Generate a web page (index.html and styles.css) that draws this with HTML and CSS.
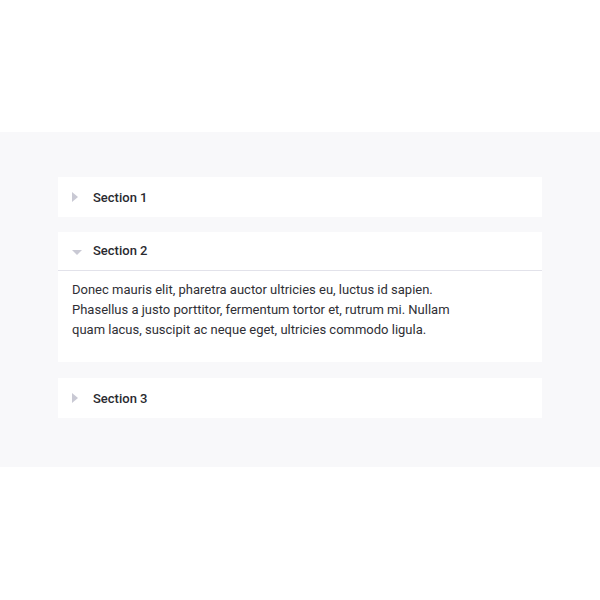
FILE: index.html
```html
<!DOCTYPE html>
<html>
<head>
<meta charset="utf-8">
<link rel="stylesheet" href="styles.css">
</head>
<body>
<section class="band">
  <div class="accordion">
    <div class="item">
      <div class="head"><span class="tri tri-right"></span><span class="title">Section 1</span></div>
    </div>
    <div class="item open">
      <div class="head"><span class="tri tri-down"></span><span class="title">Section 2</span></div>
      <div class="body">Donec mauris elit, pharetra auctor ultricies eu, luctus id sapien.<br>Phasellus a justo porttitor, fermentum tortor et, rutrum mi. Nullam<br>quam lacus, suscipit ac neque eget, ultricies commodo ligula.</div>
    </div>
    <div class="item last">
      <div class="head"><span class="tri tri-right"></span><span class="title">Section 3</span></div>
    </div>
  </div>
</section>
</body>
</html>
```
FILE: styles.css
```css
html, body {
  margin: 0;
  padding: 0;
  background: #ffffff;
}
body {
  min-height: 599px;
  display: flex;
  flex-direction: column;
  justify-content: center;
  font-family: Roboto, "Liberation Sans", sans-serif;
  font-size: 13px;
  color: #333338;
}
.band {
  background: #f8f8fa;
  padding: 45px 58px 49px;
}
.accordion {
  display: flex;
  flex-direction: column;
  gap: 15px;
}
.item {
  background: #ffffff;
}
.item.last {
  margin-top: 1px;
}
.head {
  height: 40px;
  display: flex;
  align-items: center;
  padding-left: 14px;
  box-sizing: border-box;
}
.open .head {
  height: 39px;
  padding-bottom: 2px;
  border-bottom: 1px solid #e2e2ea;
}
.title {
  font-weight: 500;
  color: #2a2a30;
  font-size: 13px;
}
.tri {
  display: inline-block;
  width: 0;
  height: 0;
}
.tri-right {
  border-top: 5px solid transparent;
  border-bottom: 5px solid transparent;
  border-left: 6px solid #c9c9d4;
  margin-right: 15px;
}
.tri-down {
  border-left: 5px solid transparent;
  border-right: 5px solid transparent;
  border-top: 5px solid #c9c9d4;
  margin-right: 11px;
  margin-top: 4px;
}
.body {
  padding: 9px 14px 22px;
  line-height: 20px;
  color: #2f2f35;
}
```
